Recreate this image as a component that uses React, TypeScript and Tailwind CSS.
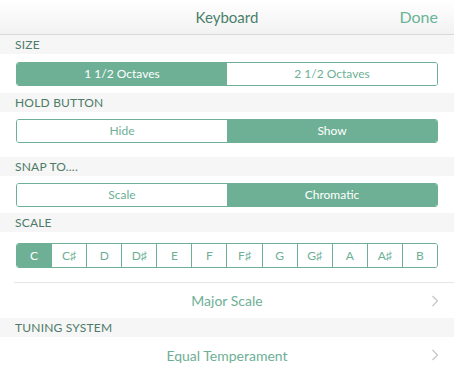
import React from "react";

const font = { fontFamily: "Lato, 'Open Sans', sans-serif" };

function Label({ text }: { text: string }) {
  return (
    <div className="h-[19px] bg-[#f6f6f6] pl-[15px] flex items-center text-[12px] text-[#4e7a68] tracking-[0.2px]">
      {text}
    </div>
  );
}

function Seg({ options, active }: { options: string[]; active: number }) {
  return (
    <div className="mx-[16px] h-[24px] flex rounded-[3px] border border-[#6db095] overflow-hidden">
      {options.map((o, i) => (
        <div
          key={o}
          className={
            "flex-1 flex items-center justify-center text-[12px] " +
            (i === active ? "bg-[#6db095] text-white" : "bg-white text-[#6db095]")
          }
        >
          {o}
        </div>
      ))}
    </div>
  );
}

function Chevron() {
  return (
    <svg width="8" height="12" viewBox="0 0 8 12" className="absolute right-[15px]">
      <path d="M1.5 1 L6.5 6 L1.5 11" fill="none" stroke="#c7c7cc" strokeWidth="1.3" />
    </svg>
  );
}

export default function App() {
  const keys = ["C", "C♯", "D", "D♯", "E", "F", "F♯", "G", "G♯", "A", "A♯", "B"];
  return (
    <div className="w-[454px] h-[371px] overflow-hidden bg-white" style={font}>
      <div className="h-[35px] relative flex items-center justify-center border-b border-[#d9d9d9] bg-gradient-to-b from-white to-[#f2f2f2]">
        <span className="text-[15px] text-[#4a7f6b]">Keyboard</span>
        <span className="absolute right-[16px] text-[16px] text-[#6ab497]">Done</span>
      </div>
      <Label text="SIZE" />
      <div className="pt-[8px] pb-[7px]">
        <Seg options={["1 1/2 Octaves", "2 1/2 Octaves"]} active={0} />
      </div>
      <Label text="HOLD BUTTON" />
      <div className="pt-[7px] pb-[14px]">
        <Seg options={["Hide", "Show"]} active={1} />
      </div>
      <Label text="SNAP TO...." />
      <div className="pt-[7px] pb-[6px]">
        <Seg options={["Scale", "Chromatic"]} active={1} />
      </div>
      <Label text="SCALE" />
      <div className="pt-[11px] pb-[14px]">
        <div className="mx-[16px] h-[25px] flex rounded-[3px] border border-[#6db095] overflow-hidden">
          {keys.map((k, i) => (
            <div
              key={k}
              className={
                "flex-1 flex items-center justify-center text-[12px] " +
                (i > 0 ? "border-l border-[#6db095] " : "") +
                (i === 0 ? "bg-[#6db095] text-white" : "bg-white text-[#6db095]")
              }
            >
              {k}
            </div>
          ))}
        </div>
      </div>
      <div className="ml-[14px] border-t border-[#e6e6e6]" />
      <div className="h-[35px] relative flex items-center justify-center">
        <span className="text-[14px] text-[#6db095]">Major Scale</span>
        <Chevron />
      </div>
      <Label text="TUNING SYSTEM" />
      <div className="h-[36px] relative flex items-center justify-center">
        <span className="text-[14px] text-[#6db095]">Equal Temperament</span>
        <Chevron />
      </div>
    </div>
  );
}
